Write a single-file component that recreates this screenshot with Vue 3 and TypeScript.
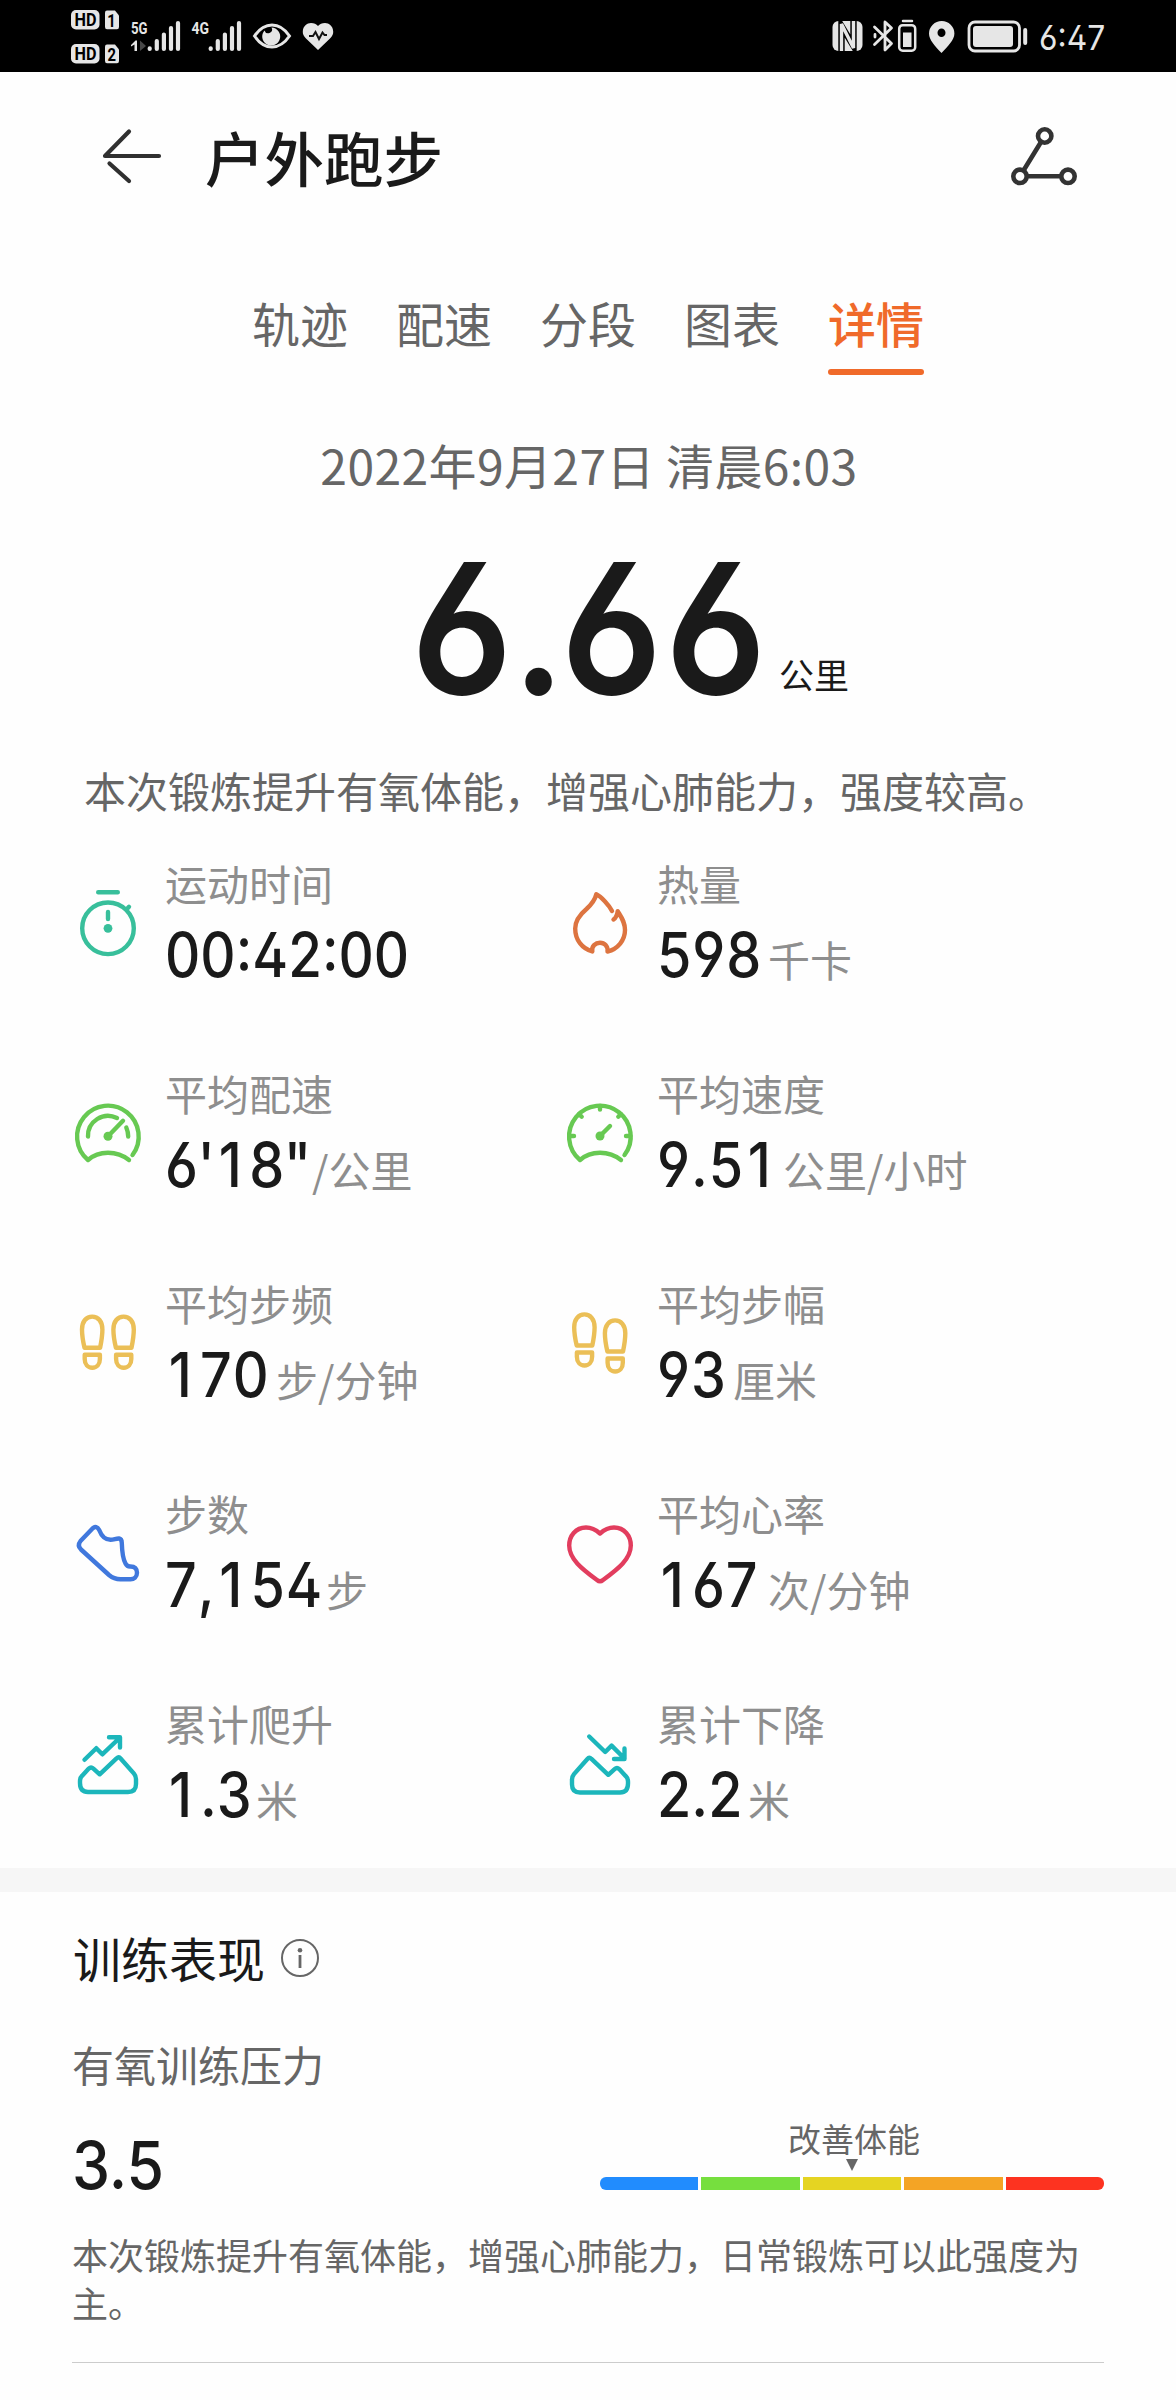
<script setup lang="ts">
interface Stat {
  icon: string
  color: string
  label: string
  value: string
  unit?: string
  width: number
}

const tabs: string[] = ['轨迹', '配速', '分段', '图表', '详情']
const activeTab = '详情'

const stats: Stat[] = [
  { icon: 'timer', color: '#38bf9b', label: '运动时间', value: '00:42:00', width: 246 },
  { icon: 'flame', color: '#dd7440', label: '热量', value: '598', unit: '千卡', width: 111 },
  { icon: 'pace', color: '#67c952', label: '平均配速', value: '6\'18"', unit: '/公里', width: 147 },
  { icon: 'speed', color: '#67c952', label: '平均速度', value: '9.51', unit: '公里/小时', width: 126 },
  { icon: 'cadence', color: '#ebbf57', label: '平均步频', value: '170', unit: '步/分钟', width: 111 },
  { icon: 'stride', color: '#ebbf57', label: '平均步幅', value: '93', unit: '厘米', width: 76 },
  { icon: 'shoe', color: '#4078dd', label: '步数', value: '7,154', unit: '步', width: 161 },
  { icon: 'heart', color: '#e23d5e', label: '平均心率', value: '167', unit: '次/分钟', width: 111 },
  { icon: 'ascent', color: '#1cb6bb', label: '累计爬升', value: '1.3', unit: '米', width: 91 },
  { icon: 'descent', color: '#1cb6bb', label: '累计下降', value: '2.2', unit: '米', width: 91 },
]

const zones: string[] = ['#218cfe', '#76df3e', '#e5d422', '#f4a425', '#fd3320']

// The narrow "1" gets its own cell so that it is as wide as the other digits.
const split = (v: string): string[] => v.match(/1|[^1]+/g) ?? []

const sole = 'M4.7 33.3C3 26 2.2 22 2.2 15C2.2 7 6.5 2.2 12.4 2.2S22.6 7 22.6 15C22.6 22 21.8 26 20.3 33.3Z'
const heel = 'M4.9 40.3H20.1V44.5C20.1 50 17 53.3 12.5 53.3S4.9 50 4.9 44.5Z'
const mountain = 'M8 55V53Q8 49.8 10.2 47.7L16.8 40.6Q19 38.4 21.4 40.6L27.7 46.3L44.8 30.2Q46.7 28.3 48.6 30.4L62 45.6Q64 48 64 51V56Q64 64 56 64H16Q8 64 8 55Z'
</script>

<template>
  <div class="screen">
    <div class="status">
      <svg class="status-left" width="280" height="72" viewBox="60 0 280 72" fill="#e6e6e6">
        <rect x="71" y="10" width="28.5" height="19.5" rx="5" />
        <rect x="71" y="44" width="28.5" height="19.5" rx="5" />
        <path d="M107 10.5H115L119 15.5V27Q119 29.3 117 29.3H107Q105 29.3 105 27V12.5Q105 10.5 107 10.5Z" />
        <path d="M107 44.5H115L119 49.5V61Q119 63.3 117 63.3H107Q105 63.3 105 61V46.5Q105 44.5 107 44.5Z" />
        <g class="badge-text" fill="#000">
          <text x="74.5" y="26" textLength="22" lengthAdjust="spacingAndGlyphs">HD</text>
          <text x="74.5" y="60" textLength="22" lengthAdjust="spacingAndGlyphs">HD</text>
          <text x="107.3" y="26.5" textLength="8.5" lengthAdjust="spacingAndGlyphs">1</text>
          <text x="107.5" y="60.5" textLength="8.5" lengthAdjust="spacingAndGlyphs">2</text>
        </g>
        <g class="net-text">
          <text x="131" y="34" textLength="16.5" lengthAdjust="spacingAndGlyphs">5G</text>
          <text x="191.5" y="34" textLength="17.5" lengthAdjust="spacingAndGlyphs">4G</text>
        </g>
        <path d="M131 45L135.5 40.5H137V51H134.5V44.5L131 46.5Z" />
        <path d="M140 40.5V51L146 46Z" fill="#484848" />
        <g stroke="#e6e6e6" stroke-width="4.2" stroke-linecap="round">
          <path d="M149.7 48.3V49M156.8 41V49M163.9 34.5V49M171 28V49M178 23V49" />
          <path d="M210.7 48.3V49M217.8 41V49M224.9 34.5V49M232 28V49M239 23V49" />
        </g>
        <path d="M254.500 36Q262 25 272 25T289.500 36Q282 47 272 47T254.500 36Z" fill="none" stroke="#e6e6e6" stroke-width="3" />
        <path d="M264.500 30.500Q265.500 34 269.500 33Q273.500 31 271.500 27.500A9 9 0 1 1 264.500 30.500Z" />
        <path d="M318 50L306 38.500Q302.500 35 302.800 31.500C303 26 307 23 311 23Q315.500 23 318 26Q320.500 23 325 23C329 23 333 26 333.200 31.500Q333.500 35 330 38.500Z" />
        <path d="M309 36H313L315.500 32L319 39L322.500 32.500L324.500 35H327" fill="none" stroke="#111" stroke-width="2" />
      </svg>
      <svg class="status-right" width="200" height="72" viewBox="830 0 200 72" fill="#e6e6e6">
        <rect x="832.500" y="21" width="30" height="30" rx="6" />
        <path d="M841.500 51V26L853.500 46V21" fill="none" stroke="#000" stroke-width="6.400" />
        <path d="M841.500 51V24L853.500 48V21" fill="none" stroke="#e6e6e6" stroke-width="3.400" />
        <path d="M874.500 27L891.500 43.500L885 50V22L891.500 28L874.500 44.500M875 34.500V37" fill="none" stroke="#e6e6e6" stroke-width="2.800" stroke-linejoin="round" stroke-linecap="round" />
        <path d="M903 21H912" stroke="#e6e6e6" stroke-width="2.500" stroke-linecap="round" />
        <rect x="899.200" y="25.200" width="16" height="25.500" rx="3.500" fill="none" stroke="#e6e6e6" stroke-width="2.500" />
        <rect x="903" y="32.500" width="8.500" height="14.500" />
        <path fill-rule="evenodd" d="M941.500 53C935 46 929 40 929 33.500A12.700 12.500 0 0 1 954.400 33.500C954.400 40 948 46 941.500 53ZM941.500 28.500A4 4.300 0 1 0 941.500 37.100A4 4.300 0 1 0 941.500 28.500Z" />
        <rect x="969" y="22" width="50.500" height="29" rx="6" fill="none" stroke="#e6e6e6" stroke-width="2.800" />
        <rect x="973" y="26" width="40" height="21" rx="3" />
        <path d="M1025.200 30V43" stroke="#e6e6e6" stroke-width="4" stroke-linecap="round" />
      </svg>
      <span class="clock">6:47</span>
    </div>

    <header class="header">
      <svg width="64" height="60" viewBox="100 126 64 60" fill="none" stroke="#303030" stroke-width="4.200" stroke-linecap="round" stroke-linejoin="round">
        <path d="M159 156H105L129 131.500" />
        <path d="M109.500 163.500L129 181" />
      </svg>
      <h1>户外跑步</h1>
      <svg class="share" width="70" height="62" viewBox="1009 124 70 62" fill="none" stroke="#333" stroke-width="4.600">
        <circle cx="1044.700" cy="135" r="6.700" />
        <circle cx="1020" cy="175.300" r="6.700" />
        <circle cx="1068" cy="175.300" r="6.700" />
        <path d="M1041 141L1023.500 169.500M1027 175.300H1061" />
      </svg>
    </header>

    <nav class="tabs">
      <span v-for="t in tabs" :key="t" :class="['tab', { active: t === activeTab }]">{{ t }}</span>
    </nav>

    <p class="date">2022年9月27日 清晨6:03</p>

    <div class="distance">
      <span class="distance-num">6<span class="dot">.</span><span class="fraction">66</span></span><span class="distance-unit">公里</span>
    </div>

    <p class="summary">本次锻炼提升有氧体能，增强心肺能力，强度较高。</p>

    <section class="stats">
      <div v-for="s in stats" :key="s.label" class="stat">
        <svg class="icon" width="72" height="72" viewBox="0 0 72 72" fill="none" :stroke="s.color" stroke-width="4.400" stroke-linecap="round" stroke-linejoin="round">
          <template v-if="s.icon === 'timer'">
            <circle cx="36" cy="40.300" r="25.800" />
            <path d="M26.200 4.200H45.800M54.500 21.500L57 18.800" />
            <path d="M36 24V31" />
            <circle cx="36" cy="40.300" r="4.400" :fill="s.color" stroke="none" />
          </template>
          <template v-else-if="s.icon === 'flame'">
            <path d="M48 23C45 17 37 8.500 32.300 6.300C31 12 27.500 16.500 22.500 21C16 26.500 11.200 32 11.200 40.500C11.200 52 18 60.500 28.300 63.500C27.300 58 31.500 54.800 36 54.800S44 58 43.500 63.500C54 61 61 52 61 42C61 34 57.500 29.500 53.700 23.200Q53 29 49.500 31.500" />
          </template>
          <template v-else-if="s.icon === 'pace'">
            <path d="M60.500 57A30.800 30.800 0 1 0 16 62Q24 54.700 36 54.700T57 62" />
            <path d="M16 38.500A20 20 0 0 1 45 20M54.300 29.500Q56.200 34 56.200 38.500M36 38.300L51 22.800" />
            <circle cx="36" cy="38.300" r="4.500" :fill="s.color" stroke="none" />
          </template>
          <template v-else-if="s.icon === 'speed'">
            <path d="M60.500 57A30.800 30.800 0 1 0 16 62Q24 54.700 36 54.700T57 62" />
            <path d="M36 8V11.500M5.500 38H10M66.500 38H62M15 16L17.700 18.700M57 16L54.300 18.700M36 38L46 28" />
            <circle cx="36" cy="38" r="4.500" :fill="s.color" stroke="none" />
          </template>
          <template v-else-if="s.icon === 'cadence'">
            <g transform="translate(7.800 6.400)"><path :d="sole" /><path :d="heel" /></g>
            <g transform="translate(39.200 6.400)"><path :d="sole" /><path :d="heel" /></g>
          </template>
          <template v-else-if="s.icon === 'stride'">
            <g transform="translate(8 4.200)"><path :d="sole" /><path :d="heel" /></g>
            <g transform="translate(38.700 10.200)"><path :d="sole" /><path :d="heel" /></g>
          </template>
          <template v-else-if="s.icon === 'shoe'">
            <path d="M8.500 23L20.500 10.500Q24.500 7 27.200 12C29.500 18 33 21.800 38.500 21.800C42 21.800 44 20.300 47 20.500Q49.800 21 49.800 25C50 32 51 41 53.500 45.500Q55 48.500 58 48.500C63 48.300 65 51 65 54.800C65 59 62 61.300 58.500 61.300H48.500Q42 61.300 37 57L9 31.500Q5 27.500 8.500 23Z" />
          </template>
          <template v-else-if="s.icon === 'heart'">
            <path d="M36 15.500C31 11 26 9.500 22 9.500C11.500 9.500 5.200 18 5.200 27.500C5.200 41 18 51 33 62Q36 64.500 39 62C54 51 66.800 41 66.800 27.500C66.800 18 60.500 9.500 50 9.500C46 9.500 41 11 36 15.500Z" />
          </template>
          <template v-else-if="s.icon === 'ascent'">
            <path d="M12.500 31.800L24.300 20.200L30.300 26.300L47.500 10M37 9.300H48V19.500" />
            <path :d="mountain" />
          </template>
          <template v-else>
            <path d="M25.200 8.500L41.200 24L47.600 17.600L60 30M50 31H60.500V20.500" />
            <path :d="mountain" transform="matrix(-1 0 0 1 72 0.500)" />
          </template>
        </svg>
        <div class="stat-body">
          <div class="stat-label">{{ s.label }}</div>
          <div class="stat-value">
            <span class="num-box" :style="{ width: s.width + 'px' }"><span :class="['num', s.icon]"><span v-for="(p, i) in split(s.value)" :key="i" :class="{ one: p === '1' }">{{ p }}</span></span></span><span v-if="s.unit" class="unit">{{ s.unit }}</span>
          </div>
        </div>
      </div>
    </section>

    <div class="divider"></div>

    <section class="training">
      <h2>
        训练表现
        <svg width="40" height="40" viewBox="0 0 40 40" fill="none" stroke="#666" stroke-width="2">
          <circle cx="20" cy="20" r="18" />
          <path d="M20 17V30" stroke-width="2.800" />
          <circle cx="20" cy="12.300" r="2.300" fill="#666" stroke="none" />
        </svg>
      </h2>
      <div class="metric-label">有氧训练压力</div>
      <div class="metric">
        <span class="score">3.5</span>
        <div class="scale">
          <span class="scale-label">改善体能</span>
          <svg class="pointer" width="12" height="12" viewBox="0 0 12 12"><path d="M0 0H12L6 12Z" fill="#666" /></svg>
          <div class="bar">
            <i v-for="z in zones" :key="z" :style="{ background: z }"></i>
          </div>
        </div>
      </div>
      <p class="desc">本次锻炼提升有氧体能，增强心肺能力，日常锻炼可以此强度为主。</p>
    </section>
  </div>
</template>

<style>
body {
  margin: 0;
  background: #fefefe;
}
</style>

<style scoped>
.screen {
  width: 1176px;
  height: 2400px;
  overflow: hidden;
  background: #fefefe;
  color: #1a1a1a;
  font-family: "Noto Sans CJK SC", sans-serif;
}
h1, h2, p {
  margin: 0;
  font-weight: 400;
}
svg {
  flex: none;
  display: block;
}
.status {
  display: flex;
  align-items: center;
  height: 72px;
  padding-left: 60px;
  background: #000;
}
.status-right {
  margin-left: 490px;
}
.badge-text, .net-text {
  font: 700 17px Roboto, sans-serif;
}
.badge-text {
  font-size: 18px;
}
.clock {
  margin-left: 9px;
  margin-top: 4px;
  color: #e6e6e6;
  font: 400 34px/40px Inter, sans-serif;
  font-feature-settings: "cv02", "cv03", "cv04";
  transform: scaleX(0.935);
  transform-origin: left;
}
.header {
  display: flex;
  align-items: center;
  height: 166px;
  padding: 2px 97px 0 100px;
  box-sizing: border-box;
}
.header h1 {
  margin-left: 41px;
  font-size: 59.500px;
  line-height: 80px;
  font-weight: 500;
}
.share {
  margin-left: auto;
}
.tabs {
  display: flex;
  justify-content: center;
  gap: 48px;
  margin-top: 54px;
}
.tab {
  padding-bottom: 17px;
  font-size: 48px;
  line-height: 60px;
  color: #666;
}
.tab.active {
  color: #f06a2a;
  font-weight: 500;
}
.tab.active::after {
  content: "";
  display: block;
  height: 6px;
  margin: 17px 0 -23px;
  border-radius: 3px;
  background: #f06a2a;
}
.date {
  margin-top: 65px;
  padding-left: 2px;
  text-align: center;
  font-size: 48px;
  line-height: 60px;
  letter-spacing: 0.4px;
  color: #666;
}
.distance {
  display: flex;
  align-items: baseline;
  height: 140px;
  margin-top: 64px;
  padding-left: 411px;
}
.distance-num {
  width: 368px;
  white-space: nowrap;
  font: 600 182px/140px Inter, sans-serif;
  font-feature-settings: "cv02", "cv03", "cv04";
  letter-spacing: -1px;
  transform: scaleX(0.925);
  transform-origin: left;
}
.dot {
  letter-spacing: -5px;
}
.fraction {
  letter-spacing: 3px;
}
.distance-unit {
  font-size: 35px;
  line-height: 40px;
  transform: translateY(-5px);
}
.summary {
  margin: 62px 0 0 84px;
  font-size: 42px;
  line-height: 60px;
  color: #666;
}
.stats {
  display: grid;
  grid-template-columns: 492px 492px;
  row-gap: 84px;
  margin: 39px 0 0 72px;
}
.stat {
  display: flex;
  height: 126px;
}
.icon {
  margin-top: 29px;
}
.stat-body {
  margin-left: 21px;
  white-space: nowrap;
}
.stat-label {
  font-size: 42px;
  line-height: 48px;
  color: #8e8e8e;
}
.stat-value {
  display: flex;
  align-items: baseline;
  height: 60px;
  margin-top: 18px;
}
.num-box {
  display: block;
  font: 500 61.500px/60px Inter, sans-serif;
}
.num {
  display: inline-block;
  font-feature-settings: "cv02", "cv03", "cv04";
  font-kerning: none;
  letter-spacing: 1px;
  transform: scaleX(0.905);
  transform-origin: left;
}
.one {
  display: inline-block;
  width: 38.600px;
  padding-right: 4px;
  box-sizing: border-box;
  text-align: center;
}
.num.timer {
  font-kerning: auto;
  letter-spacing: 0;
  transform: scaleX(0.89);
}
.num.pace {
  letter-spacing: -0.600px;
}
.num.ascent, .num.descent {
  letter-spacing: 0;
}
.unit {
  font-size: 42px;
  line-height: 60px;
  color: #8e8e8e;
}
.divider {
  height: 24px;
  margin-top: 43px;
  background: #f6f6f6;
}
.training {
  margin: 0 72px;
  padding: 34px 0 36px;
  border-bottom: 1px solid #ccc;
}
h2 {
  display: flex;
  align-items: center;
  gap: 15px;
  height: 60px;
  padding: 1px 0 0 1px;
  box-sizing: border-box;
  font-size: 48px;
  line-height: 60px;
}
h2 svg {
  margin-top: 2px;
}
.metric-label {
  margin-top: 54px;
  font-size: 42px;
  line-height: 48px;
  color: #666;
}
.metric {
  display: flex;
  justify-content: space-between;
  align-items: flex-end;
  height: 82px;
  margin-top: 30px;
}
.score {
  font: 500 66px/70px Inter, sans-serif;
  transform: scaleX(0.92);
  transform-origin: left;
}
.scale {
  width: 504px;
  height: 82px;
}
.scale-label {
  display: block;
  padding-left: 4px;
  text-align: center;
  font-size: 33px;
  line-height: 40px;
  color: #666;
}
.pointer {
  margin: 1px auto 6px;
}
.bar {
  display: flex;
  gap: 3px;
  height: 13px;
}
.bar i {
  flex: 1;
}
.bar i:first-child {
  border-radius: 6px 0 0 6px;
}
.bar i:last-child {
  border-radius: 0 6px 6px 0;
}
.desc {
  margin-top: 30px;
  font-size: 36px;
  line-height: 48px;
  color: #666;
}
</style>
